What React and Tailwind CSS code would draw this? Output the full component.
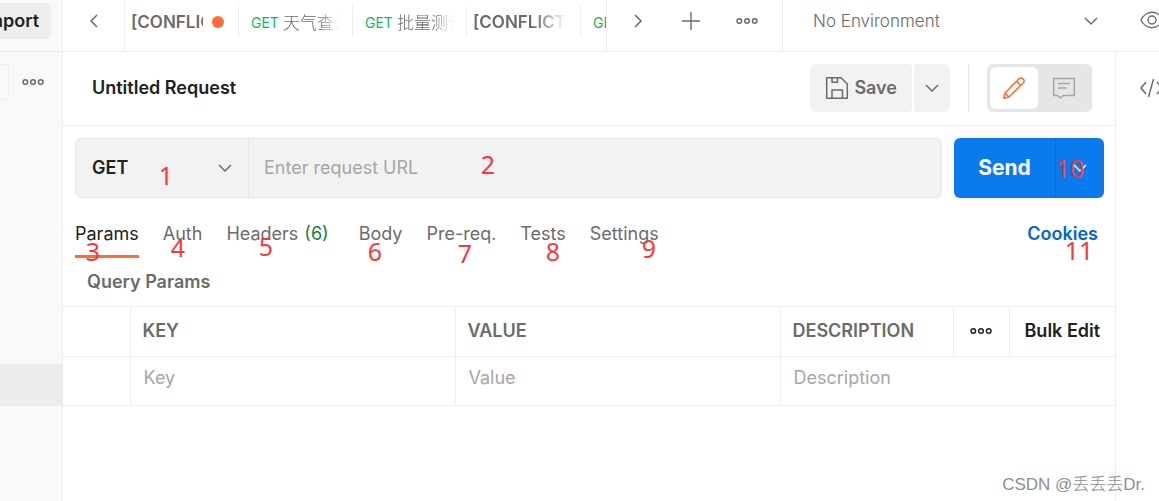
import { useState } from 'react'

const MARKS = [
  { text: '1', x: 166, y: 175 },
  { text: '2', x: 488, y: 164 },
  { text: '3', x: 93, y: 251 },
  { text: '4', x: 178, y: 247 },
  { text: '5', x: 266, y: 246 },
  { text: '6', x: 375, y: 251 },
  { text: '7', x: 465, y: 253 },
  { text: '8', x: 553, y: 251 },
  { text: '9', x: 649, y: 248 },
  { text: '10', x: 1070, y: 168 },
  { text: '11', x: 1079, y: 250 },
]

const SECTIONS = ['Params', 'Auth', 'Headers', 'Body', 'Pre-req.', 'Tests', 'Settings']
const METHODS = ['GET', 'POST', 'PUT', 'PATCH', 'DELETE']

export default function App() {
  const [section, setSection] = useState('Params')

  return (
    <div className="relative flex h-screen overflow-hidden bg-white font-['Inter','Noto_Sans_CJK_SC',sans-serif] text-lg leading-6 text-[#6b6b6b]">
      <Sidebar />
      <div className="flex min-w-0 flex-1 flex-col">
        <TopBar />
        <div className="flex min-h-0 flex-1">
          <main className="min-w-0 flex-1 border-r border-[#ededed]">
            <RequestHeader />
            <UrlBar />
            <SectionTabs active={section} onSelect={setSection} />
            <h2 className="pt-3 pb-3 pl-6 font-semibold">Query Params</h2>
            <ParamsTable />
          </main>
          <aside className="w-[43px] shrink-0 overflow-hidden pt-6 pl-[23px]">
            <button aria-label="Code" className="block" type="button"><CodeIcon /></button>
          </aside>
        </div>
      </div>
      <Marks />
      <p className="pointer-events-none absolute right-[14px] bottom-1 font-['Liberation_Sans','Noto_Sans_CJK_SC',sans-serif] text-[17px] font-light text-[#8e8e8e]">CSDN @丢丢丢Dr.</p>
    </div>
  )
}

function Sidebar() {
  return (
    <nav aria-label="Workspace" className="flex w-[63px] shrink-0 flex-col overflow-hidden border-r border-[#ededed] bg-[#f9f9f9]">
      <div className="flex h-[52px] shrink-0 justify-end border-b border-[#ededed] pt-[3px] pr-[11px]">
        <button className="h-9 shrink-0 rounded-md bg-[#ededed] px-3 font-semibold text-[#212121]" type="button">Import</button>
      </div>
      <div className="flex h-[60px] shrink-0 items-center justify-between pr-[18px]">
        <input aria-label="Filter" className="h-9 w-[9px] rounded-r border border-l-0 border-[#ededed]" />
        <button aria-label="Collection actions" type="button"><DotsIcon /></button>
      </div>
      <ul className="pt-[252px]">
        <li className="h-[42px] bg-[#ececec]" />
      </ul>
    </nav>
  )
}

function TopBar() {
  return (
    <header className="flex h-[52px] shrink-0 border-b border-[#ededed]">
      <button aria-label="Previous tabs" className="flex w-[62px] shrink-0 items-center justify-center border-r border-[#ededed] pb-[9px]" type="button"><ChevronIcon className="rotate-90" /></button>
      <div className="flex min-w-0 flex-1 overflow-hidden pt-[6px]">
        <ConflictTab dirty />
        <RequestTab name="天气查询" />
        <RequestTab name="批量测试" />
        <ConflictTab />
        <RequestTab name="天气查询" />
      </div>
      <div className="flex w-[177px] shrink-0 items-center gap-[35px] border-x border-[#ededed] pb-[9px] pl-[23px]">
        <button aria-label="Next tabs" type="button"><ChevronIcon className="-rotate-90" /></button>
        <button aria-label="New tab" type="button"><PlusIcon /></button>
        <button aria-label="Tab options" type="button"><DotsIcon /></button>
      </div>
      <div className="relative w-[333px] shrink-0">
        <select aria-label="Environment" className="h-[42px] w-full appearance-none bg-transparent pl-[30px] text-[17px] font-light outline-none">
          <option>No Environment</option>
        </select>
        <ChevronIcon className="pointer-events-none absolute top-[13px] right-[17px]" />
      </div>
      <div className="flex w-[43px] shrink-0 items-center overflow-hidden pb-[11px] pl-6">
        <button aria-label="Environment quick look" className="shrink-0" type="button"><EyeIcon /></button>
      </div>
    </header>
  )
}

const fadeRight = '[mask-image:linear-gradient(to_right,black_65%,transparent)]'

function ConflictTab({ dirty }) {
  return (
    <a className="flex h-[31px] w-[114px] shrink-0 items-center gap-[9px] border-r border-[#ededed] pr-[14px] pl-[6px]" href="#conflict">
      <span className={`min-w-0 flex-1 overflow-hidden text-[17px] font-semibold whitespace-nowrap ${dirty ? '' : fadeRight}`}>[CONFLICT]</span>
      {dirty ? <span className="h-3 w-3 shrink-0 rounded-full bg-[#ff6c37]" /> : null}
    </a>
  )
}

function RequestTab({ name }) {
  return (
    <a className="flex h-[31px] w-[114px] shrink-0 items-center gap-1 border-r border-[#ededed] pt-[2px] pr-3 pl-3" href="#request">
      <span className="text-sm text-[#0cbb52]">GET</span>
      <span className={`min-w-0 flex-1 overflow-hidden text-[17px] font-light whitespace-nowrap ${fadeRight}`}>{name}</span>
    </a>
  )
}

function RequestHeader() {
  return (
    <div className="flex h-[74px] items-center border-b border-[#ededed] pr-[23px] pb-[2px] pl-[29px]">
      <h1 className="flex-1 font-semibold text-[#212121]">Untitled Request</h1>
      <button className="flex h-12 items-center gap-[5px] rounded-l-md rounded-r-sm bg-[#f2f2f2] px-[15px] font-semibold" type="button">
        <SaveIcon />
        Save
      </button>
      <button aria-label="Save options" className="ml-[2px] flex h-12 w-9 items-center justify-center rounded-l-sm rounded-r-md bg-[#f2f2f2]" type="button"><ChevronIcon /></button>
      <div className="ml-[18px] h-12 w-px bg-[#e6e6e6]" />
      <div className="ml-[18px] flex h-12 w-[105px] rounded-md bg-[#e6e6e6] p-[3px]">
        <button aria-label="Build" className="flex w-12 items-center justify-center rounded-md bg-white" type="button"><PencilIcon /></button>
        <button aria-label="Comments" className="flex flex-1 items-center justify-center" type="button"><CommentIcon /></button>
      </div>
    </div>
  )
}

function UrlBar() {
  return (
    <form className="flex h-[72px] gap-3 pt-3 pr-[11px] pl-3" onSubmit={(event) => event.preventDefault()}>
      <div className="flex min-w-0 flex-1 rounded-md border border-[#e6e6e6] bg-[#f2f2f2]">
        <div className="relative w-[173px] border-r border-[#e6e6e6]">
          <select aria-label="Method" className="h-full w-full appearance-none bg-transparent pl-4 font-semibold text-[#212121] outline-none">
            {METHODS.map((method) => <option key={method}>{method}</option>)}
          </select>
          <ChevronIcon className="pointer-events-none absolute top-[21px] right-[15px]" />
        </div>
        <input aria-label="Request URL" className="min-w-0 flex-1 bg-transparent px-[15px] outline-none placeholder:text-[#a6a6a6]" placeholder="Enter request URL" />
      </div>
      <div className="flex w-[150px] rounded-md bg-[#097bed] text-white">
        <button className="flex-1 border-r border-[#0a6cd1] text-[21px] font-bold" type="submit">Send</button>
        <button aria-label="Send options" className="flex w-12 items-center justify-center" type="button"><ChevronIcon /></button>
      </div>
    </form>
  )
}

function SectionTabs({ active, onSelect }) {
  return (
    <div className="flex h-[60px] items-end justify-between pr-[17px] pl-3">
      <div className="flex gap-6" role="tablist">
        {SECTIONS.map((name) => (
          <button
            aria-selected={name === active}
            className={`border-b-3 pb-[9px] whitespace-nowrap ${name === active ? 'border-[#ff6c37] text-[#212121]' : 'border-transparent'}`}
            key={name}
            onClick={() => onSelect(name)}
            role="tab"
            type="button"
          >
            {name}
            {name === 'Headers' ? <span className="mr-[6px] ml-[6px] text-[#0b8642]">(6)</span> : null}
          </button>
        ))}
      </div>
      <a className="pb-3 font-semibold text-[#0265d2]" href="#cookies">Cookies</a>
    </div>
  )
}

function ParamsTable() {
  return (
    <table className="w-full table-fixed border-collapse border-y border-[#ededed] text-left">
      <thead>
        <tr className="h-[50px] border-b border-[#ededed]">
          <td className="w-[67px]" />
          <th className={headClass}>KEY</th>
          <th className={headClass}>VALUE</th>
          <th className={`${headClass} w-[173px]`}>DESCRIPTION</th>
          <th className="w-14 border-l border-[#ededed] pb-[2px]">
            <button aria-label="Columns" className="mx-auto block text-[#212121]" type="button"><DotsIcon /></button>
          </th>
          <th className="w-[106px] border-l border-[#ededed] pb-[2px] pl-[15px]">
            <button className="font-semibold whitespace-nowrap text-[#212121]" type="button">Bulk Edit</button>
          </th>
        </tr>
      </thead>
      <tbody>
        <tr className="h-[49px]">
          <td />
          <ParamCell label="Key" />
          <ParamCell label="Value" />
          <ParamCell label="Description" span={3} />
        </tr>
      </tbody>
    </table>
  )
}

const headClass = 'border-l border-[#ededed] pb-[2px] pl-3 font-semibold'

function ParamCell({ label, span }) {
  return (
    <td className="border-l border-[#ededed] pt-[9px] pl-[13px] align-top" colSpan={span}>
      <input aria-label={label} className="block h-6 w-full bg-transparent outline-none placeholder:text-[#a6a6a6]" placeholder={label} />
    </td>
  )
}

function Marks() {
  return MARKS.map((mark) => (
    <span
      className="pointer-events-none absolute -translate-x-1/2 -translate-y-1/2 font-['Noto_Sans',sans-serif] text-[25px] leading-none text-[#fb3838]"
      key={mark.text}
      style={{ left: mark.x, top: mark.y }}
    >
      {mark.text}
    </span>
  ))
}

function ChevronIcon({ className = '' }) {
  return (
    <svg className={className} fill="none" height="16" stroke="currentColor" strokeWidth="1.5" viewBox="0 0 16 16" width="16">
      <path d="M2 5l6 6 6-6" />
    </svg>
  )
}

function DotsIcon() {
  return (
    <svg className="block" fill="none" height="8" stroke="currentColor" strokeWidth="1.5" viewBox="0 0 22 8" width="22">
      <circle cx="3.3" cy="4" r="2.3" />
      <circle cx="11" cy="4" r="2.3" />
      <circle cx="18.7" cy="4" r="2.3" />
    </svg>
  )
}

function PlusIcon() {
  return (
    <svg className="block" fill="none" height="20" stroke="currentColor" strokeWidth="1.4" viewBox="0 0 20 20" width="20">
      <path d="M10 1v18M1 10h18" />
    </svg>
  )
}

function EyeIcon() {
  return (
    <svg className="block" fill="none" height="18" stroke="currentColor" strokeWidth="1.4" viewBox="0 0 24 18" width="24">
      <path d="M1 9c2-4.5 6.5-7.7 11-7.7S21 4.5 23 9c-2 4.5-6.500 7.700-11 7.700S3 13.500 1 9z" />
      <circle cx="12" cy="9" r="4" />
    </svg>
  )
}

function CodeIcon() {
  return (
    <svg className="block" fill="none" height="24" stroke="currentColor" strokeWidth="1.5" viewBox="0 0 26 24" width="26">
      <path d="M7 6l-5 6 5 6M14.5 3l-5 18M18 6l5 6-5 6" />
    </svg>
  )
}

function SaveIcon() {
  return (
    <svg fill="none" height="24" stroke="currentColor" strokeLinejoin="round" strokeWidth="1.5" viewBox="0 0 24 24" width="24">
      <path d="M2.500 1.700h13.500l6.300 6.300v14.300H1.700V1.700z" />
      <path d="M7 1.700v4.600h5.500V1.700M7 22.300v-8.300h10.500v8.300" />
    </svg>
  )
}

function PencilIcon() {
  return (
    <svg fill="none" height="24" stroke="#ff6c37" strokeLinejoin="round" strokeWidth="1.5" viewBox="0 0 24 24" width="24">
      <path d="M1.700 22.300l1.300-5.300L17.200 2.600a2.400 2.400 0 0 1 3.400 0l.8.8a2.400 2.400 0 0 1 0 3.400L7 21z" />
      <path d="M14.600 5.200l4.200 4.200M3 17l4 4" />
    </svg>
  )
}

function CommentIcon() {
  return (
    <svg fill="none" height="24" stroke="#a6a6a6" strokeLinejoin="round" strokeWidth="1.5" viewBox="0 0 24 24" width="24">
      <path d="M1.700 2.500h20.600v17h-10.800L8.500 22l-3-2.500H1.700z" />
      <path d="M6 7.500h12M6 12h8.500" />
    </svg>
  )
}
